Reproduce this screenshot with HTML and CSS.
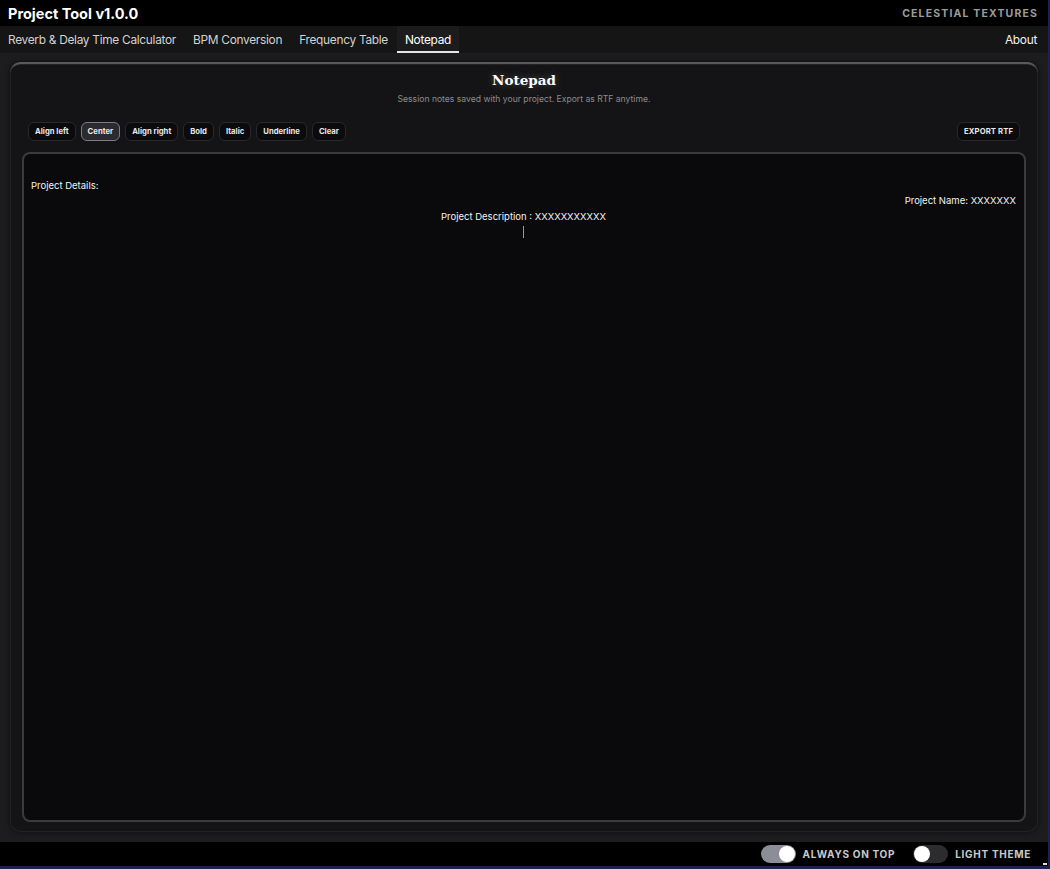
FILE: index.html
```html
<!DOCTYPE html>
<html lang="en">
<head>
    <meta charset="UTF-8">
    <meta name="viewport" content="width=device-width, initial-scale=1.0">
    <title>Project Tool v1.0.0</title>
    <link rel="stylesheet" href="styles.css">
</head>
<body>

<div class="app">
    <header class="titlebar">
        <h1>Project Tool v1.0.0</h1>
        <span class="brand">CELESTIAL TEXTURES</span>
    </header>

    <nav class="tabs">
        <a class="tab">Reverb &amp; Delay Time Calculator</a>
        <a class="tab">BPM Conversion</a>
        <a class="tab">Frequency Table</a>
        <a class="tab active">Notepad</a>
        <a class="tab about">About</a>
    </nav>

    <main class="main">
        <section class="panel">
            <div class="panel-head">
                <h2>Notepad</h2>
                <p>Session notes saved with your project. Export as RTF anytime.</p>
            </div>

            <div class="toolbar">
                <div class="tools">
                    <button class="tool">Align left</button>
                    <button class="tool active">Center</button>
                    <button class="tool">Align right</button>
                    <button class="tool">Bold</button>
                    <button class="tool">Italic</button>
                    <button class="tool">Underline</button>
                    <button class="tool">Clear</button>
                </div>
                <button class="tool export">EXPORT RTF</button>
            </div>

            <div class="editor" contenteditable="true">
                <div class="line">&nbsp;</div>
                <div class="line">Project Details:</div>
                <div class="line right">Project Name: XXXXXXX</div>
                <div class="line center">Project Description : XXXXXXXXXXX</div>
                <div class="line center"><span class="caret"></span></div>
            </div>
        </section>
    </main>

    <footer class="statusbar">
        <label class="toggle">
            <span class="switch on"><span class="knob"></span></span>
            ALWAYS ON TOP
        </label>
        <label class="toggle">
            <span class="switch"><span class="knob"></span></span>
            LIGHT THEME
        </label>
        <span class="grip"></span>
    </footer>
</div>

</body>
</html>
```

FILE: styles.css
```css
* {
    box-sizing: border-box;
}

html, body {
    margin: 0;
    height: 100%;
    background: #000;
}

body {
    font-family: Inter, "Noto Sans", Arial, sans-serif;
    color: #fff;
}

.app {
    height: 869px;
    display: flex;
    flex-direction: column;
    border-right: 2px solid #1b2150;
    border-bottom: 3px solid #1b2150;
}

/* barra titolo */
.titlebar {
    height: 26px;
    background: #000;
    display: flex;
    align-items: center;
    justify-content: space-between;
    padding: 0 10px 0 8px;
}

.titlebar h1 {
    margin: 0;
    font-size: 14.5px;
    font-weight: 700;
}

.brand {
    font-size: 10.5px;
    font-weight: 700;
    letter-spacing: 1.15px;
    color: #9b9b9b;
}

/* tabs */
.tabs {
    height: 27px;
    background: #151515;
    display: flex;
    align-items: stretch;
}

.tab {
    font-size: 11.9px;
    letter-spacing: -0.3px;
    color: #d2d2d2;
    padding: 0 8px;
    margin-right: 1px;
    display: flex;
    align-items: center;
    cursor: pointer;
}

.tab.active {
    color: #fff;
    background: #1c1c1c;
    border-bottom: 2px solid #e6e6e6;
    padding-top: 2px;
}

.tab.about {
    margin-left: auto;
    margin-right: 0;
    padding-right: 11px;
    color: #f0f0f0;
}

/* area principale */
.main {
    flex: 1;
    background: #1d1d1f;
    padding: 9px 10px 10px 10px;
    display: flex;
}

.panel {
    flex: 1;
    background: #141416;
    border-radius: 11px;
    border-top: 2px solid #5a5a5e;
    box-shadow: 0 0 6px rgba(0, 0, 0, 0.6), inset 0 0 0 1px #232326;
    padding: 0 12px 10px 12px;
    display: flex;
    flex-direction: column;
}

.panel-head {
    text-align: center;
    padding-top: 6px;
}

.panel-head h2 {
    margin: 0;
    font-family: "DejaVu Serif", Georgia, serif;
    font-size: 13.5px;
    font-weight: 700;
    line-height: 20px;
    text-shadow: 0 0 8px rgba(255, 255, 255, 0.25);
}

.panel-head p {
    margin: 4px 0 0;
    font-size: 8.6px;
    color: #8c8c8e;
}

.toolbar {
    display: flex;
    justify-content: space-between;
    align-items: center;
    margin: 18px 6px 0 6px;
}

.tools {
    display: flex;
    gap: 5px;
}

.tool {
    font-family: Inter, "Noto Sans", Arial, sans-serif;
    font-size: 7.7px;
    font-weight: 700;
    color: #e8e8e8;
    background: #0b0b0d;
    border: 1px solid #29292c;
    border-radius: 6px;
    height: 19px;
    padding: 0 6px;
    cursor: pointer;
}

.tool.active {
    background: #2b2b2f;
    border: 1.5px solid #7c7c82;
}

.tool.export {
    letter-spacing: 0.1px;
    padding: 0 6px;
}

.editor {
    flex: 1;
    margin-top: 11px;
    background: #0a0a0c;
    border: 2px solid #3b3b3e;
    border-radius: 8px;
    padding: 8px 8px 8px 7px;
    font-size: 9.5px;
    line-height: 15.5px;
    color: #f2f2f2;
    outline: none;
}

.line.right {
    text-align: right;
}

.line.center {
    text-align: center;
}

.caret {
    display: inline-block;
    width: 1px;
    height: 12px;
    background: #9a9a9a;
    vertical-align: middle;
}

/* barra inferiore */
.statusbar {
    height: 24px;
    background: #000;
    display: flex;
    align-items: center;
    justify-content: flex-end;
    gap: 18px;
    padding-right: 17px;
    position: relative;
}

.toggle {
    display: flex;
    align-items: center;
    gap: 7px;
    font-size: 10px;
    font-weight: 700;
    letter-spacing: 0.7px;
    color: #c9c9cb;
}

.switch {
    width: 35px;
    height: 18px;
    border-radius: 9px;
    background: #2c2c2e;
    position: relative;
}

.switch.on {
    background: #8b8e97;
}

.knob {
    position: absolute;
    top: 1px;
    left: 1px;
    width: 16px;
    height: 16px;
    border-radius: 50%;
    background: #fff;
}

.switch.on .knob {
    left: 18px;
}

.grip {
    position: absolute;
    right: 1px;
    bottom: 1px;
    width: 4px;
    height: 2px;
    background: #ddd;
}
```
